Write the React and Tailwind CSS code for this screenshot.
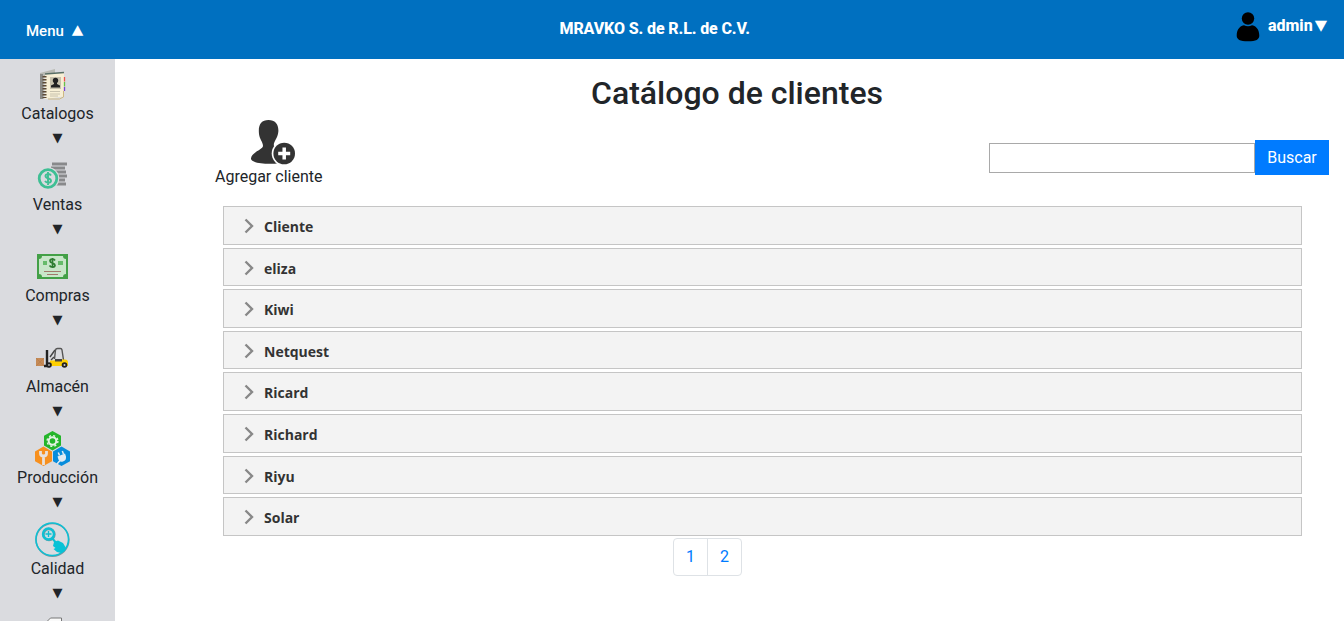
import React from "react";

function CatalogIcon() {
  return (
    <svg width="35" height="35" viewBox="0 0 35 35">
      <path d="M5 6l15-4v5L9 10v22H5z" fill="#b9bab3" />
      <path d="M6.500 7v25" stroke="#8a8a86" strokeWidth="3" />
      <path d="M10 7l19-1.500v24L10 32z" fill="#f7efd5" />
      <path d="M10 7l19-1.500" stroke="#596f66" strokeWidth="1.500" />
      <path d="M9.500 9v22" stroke="#5b4935" strokeWidth="4" strokeDasharray="1.600 1.400" />
      <path d="M15 10h11v12H15z" fill="#c7c1ac" />
      <circle cx="20.500" cy="13.500" r="2.700" fill="#222" />
      <path d="M16 20.500V18.500l3-1.500v-2h3v2l3 1.500v2z" fill="#222" />
      <path d="M15 24.500h10M15 27h10M15 29h8" stroke="#c8c2ae" />
      <path d="M29.500 10v4.500" stroke="#ee5349" strokeWidth="1.300" />
      <path d="M29.500 15v4.500" stroke="#67bf47" strokeWidth="1.300" />
      <path d="M29.500 20v4" stroke="#7941d5" strokeWidth="1.300" />
      <path d="M28.500 24v6l-4 2H13" stroke="#cdb883" fill="none" />
    </svg>
  );
}

function SalesIcon() {
  return (
    <svg width="35" height="35" viewBox="0 0 35 35">
      <path d="M17 6h15M16 10h14M19 14h12M21 18h11M22 22h8M21 26h10" stroke="#88898b" strokeWidth="2.900" />
      <circle cx="13" cy="20.500" r="11.200" fill="#dadbdf" />
      <circle cx="13" cy="20.500" r="8.800" fill="#dadbdf" stroke="#3fbf94" strokeWidth="2.800" />
      <path d="M16 17.500c-1-2-5.500-2-5.500.6 0 3 5.500 1.700 5.500 4.600 0 2.500-4.500 2.600-6 .3M13 14v13" fill="none" stroke="#3fbf94" strokeWidth="1.900" />
    </svg>
  );
}

function PurchaseIcon() {
  return (
    <svg width="35" height="35" viewBox="0 0 35 35">
      <path d="M2 5h31v25H2z" fill="#43a047" />
      <path d="M7 7h21c0 2 1 3 3 3v15c-2 0-3 1-3 3H7c0-2-1-3-3-3V10c2 0 3-1 3-3z" fill="#c8e6c9" />
      <path d="M8 12h4v4H8zM23 12h5v4h-5z" fill="#66bb6a" />
      <path d="M20 11.500c-1-2-5-1.800-5 .5 0 2.700 5 1.600 5 4.300 0 2.300-4 2.400-5.500.2M17.500 9v10" fill="none" stroke="#2e7d32" strokeWidth="1.700" />
      <path d="M9 22.500h17M12 25.500h11" stroke="#a1796a" strokeWidth="1.100" />
    </svg>
  );
}

function WarehouseIcon() {
  return (
    <svg width="35" height="35" viewBox="0 0 35 35">
      <path d="M1 18h8v8H1z" fill="#c58a56" />
      <path d="M1 18l8 8M9 18l-8 8" stroke="#b27a4b" strokeWidth=".6" />
      <path d="M9 26h6M12 10v16" stroke="#222" strokeWidth="2.400" />
      <path d="M15 17l5-7M16 20l3-3" stroke="#444" strokeWidth="1.400" />
      <path d="M19.500 19l1-9q.3-1.500 2-1.500h3q1.200 0 1.500 1.500l1.500 10" fill="none" stroke="#555" strokeWidth="1.400" />
      <path d="M15 20.500h4l2-1h9q3 0 3 3V26H15z" fill="#ffd000" />
      <path d="M20 19h7v2.500h-7z" fill="#444" />
      <circle cx="14" cy="25" r="2.800" fill="#222" /><circle cx="14" cy="25" r="1" fill="#aaa" />
      <circle cx="29.500" cy="25" r="2.800" fill="#222" /><circle cx="29.500" cy="25" r="1" fill="#ccc" />
    </svg>
  );
}

function ProductionIcon() {
  return (
    <svg width="35" height="35" viewBox="0 0 35 35">
      <path d="M17.500 0l8.500 4.800v9.700l-8.500 5-8.500-5V4.800z" fill="#24b52a" />
      <circle cx="17.500" cy="10" r="3.800" fill="none" stroke="#e2f3e2" strokeWidth="2" />
      <circle cx="17.500" cy="10" r="5.400" fill="none" stroke="#e2f3e2" strokeWidth="1.400" strokeDasharray="2.120 2.120" />
      <path d="M8.500 15.500l8.500 5v9.700L8.500 35 0 30.200v-9.700z" fill="#f7901e" />
      <path d="M8.500 34v-8M5.500 20v2.500q0 2.500 3 2.500t3-2.500V20" fill="none" stroke="#e7e1dc" strokeWidth="2.800" />
      <path d="M26.500 15.500l8.500 5v9.700L26.500 35 18 30.200v-9.700z" fill="#078ddc" />
      <path d="M22.500 25.500l7.500-3 1 3q.5 4-3 5t-4.500-2z" fill="#e0ebf3" />
      <path d="M24.500 24.500l-1.200-3M28.500 23l-1.200-3M25 29.500L22 33" stroke="#e0ebf3" strokeWidth="1.500" />
    </svg>
  );
}

function QualityIcon() {
  return (
    <svg width="35" height="35" viewBox="0 0 35 35">
      <circle cx="17.500" cy="17.800" r="16.400" fill="none" stroke="#7898a0" strokeWidth="1.500" />
      <circle cx="17.200" cy="17.200" r="16.300" fill="none" stroke="#0dc0d4" strokeWidth="1.500" />
      <circle cx="14" cy="12.500" r="5.500" fill="#c2e0e6" stroke="#7898a0" strokeWidth="2.400" />
      <circle cx="13.500" cy="12" r="5.500" fill="none" stroke="#0dc0d4" strokeWidth="2.400" />
      <path d="M10.500 12h6M13.500 9v6" stroke="#0dbed0" strokeWidth="1.300" />
      <path d="M17 16l5 6" stroke="#0dbed0" strokeWidth="2" />
      <path d="M19 20l4-1.500 5 2.500 3 5-1 3-4 2-4-1-3.500-3 2-1-2.500-2z" fill="#08c2d6" />
    </svg>
  );
}

const sections = [
  ["Catalogos", CatalogIcon],
  ["Ventas", SalesIcon],
  ["Compras", PurchaseIcon],
  ["Almacén", WarehouseIcon],
  ["Producción", ProductionIcon],
  ["Calidad", QualityIcon],
];

const clients = ["Cliente", "eliza", "Kiwi", "Netquest", "Ricard", "Richard", "Riyu", "Solar"];

export default function App() {
  return (
    <div className="flex h-[621px] w-[1344px] flex-col overflow-hidden bg-white font-['Roboto',sans-serif] text-base leading-6 text-[#212529]">
      <header className="flex h-[59px] shrink-0 bg-[#0070c0] text-white">
        <button className="flex w-[120px] items-center gap-2 pt-0.5 pl-[26px] text-[15px] font-medium">
          <span>Menu</span>
          <span className="origin-center scale-y-90 pb-1 font-['DejaVu_Sans',sans-serif] text-[15px]">▲</span>
        </button>
        <div className="flex-1 pt-[17px] pl-[439.500px] text-base font-extrabold tracking-[-0.12px]">MRAVKO S. de R.L. de C.V.</div>
        <div className="flex w-[108px]">
          <svg className="mt-3 mr-2" width="24" height="30" viewBox="0 0 24 30">
            <circle cx="12" cy="6.500" r="6.200" />
            <path d="M.7 23.500C.7 17 5 13.300 8 13.300q4 2 8 0c3 0 7.300 3.700 7.300 10.200 0 4-3 5.800-11.300 5.800S.7 27.500.7 23.500z" />
          </svg>
          <div className="flex gap-0.5 pt-3.5">
            <span className="font-extrabold">admin</span>
            <span className="-mt-0.5 origin-center scale-y-90 font-['DejaVu_Sans',sans-serif] text-base">▼</span>
          </div>
        </div>
      </header>
      <div className="flex min-h-0 flex-1">
        <aside className="w-[115px] shrink-0 overflow-hidden bg-[#dadbdf]">
          {sections.map(([label, Icon]) => (
            <div key={label} className="flex h-[91px] flex-col items-center pt-2">
              <div className="h-[35px] pr-[10px]"><Icon /></div>
              <span>{label}</span>
              <span className="font-['DejaVu_Sans',sans-serif] text-[13px]">▼</span>
            </div>
          ))}
          <div className="flex justify-center pt-3 pr-[8px]">
            <svg width="18" height="20" viewBox="0 0 18 20">
              <path d="M1.500 20V5l4-4h11v19" fill="#fafafa" stroke="#777" />
            </svg>
          </div>
        </aside>
        <main className="flex-1 pt-[15px]">
          <h1 className="pl-[15px] text-center text-[32px] leading-[38px] font-medium">Catálogo de clientes</h1>
          <div className="flex h-[94px] justify-between pt-2 pr-[15px] pl-[100px]">
            <div className="flex flex-col items-center">
              <svg className="ml-2 h-[45px] w-[46px]" viewBox="0 0 46 45">
                <path d="M18.500 0c7 0 10.500 4.500 9.800 12-.5 6-4.500 9-4.500 13 0 2 3 2.500 5 4l1 14C20 45 0 43.500 1 38.500c0-6 12-9 12-12.500 0-4-3.500-7-4-12C8 5 11 0 18.500 0z" fill="#333" />
                <circle cx="34" cy="33.500" r="12.300" fill="#fff" />
                <circle cx="34.200" cy="33.500" r="10.800" fill="#333" />
                <path d="M34.200 27.500v12M28.200 33.500h12" stroke="#fff" strokeWidth="3.500" />
              </svg>
              <span>Agregar cliente</span>
            </div>
            <div className="flex h-[75px] items-center">
              <input aria-label="Buscar cliente" className="mt-px h-[30px] w-[266px] border border-[#a9a9a9] bg-white outline-none" />
              <button className="h-[35px] w-[74px] bg-[#007bff] text-white">Buscar</button>
            </div>
          </div>
          <div className="flex flex-col gap-[3px] pr-[42px] pl-[108px]">
            {clients.map((name) => (
              <button key={name} className="flex h-[38.600px] items-center gap-2.5 border border-[#c5c5c5] bg-[#f3f3f3] pt-[1.500px] pl-5 text-left font-['Open_Sans',sans-serif] text-sm font-bold text-[#333]">
                <svg width="10" height="16" viewBox="0 0 10 16" fill="none" stroke="#888" strokeWidth="2.400">
                  <path d="M1.500 1.500L8 8l-6.500 6.500" />
                </svg>
                <span className="pt-0.5">{name}</span>
              </button>
            ))}
          </div>
          <nav className="mt-0.5 ml-[558px] flex h-[38px] w-[69px] divide-x divide-[#dee2e6] rounded border border-[#dee2e6] text-[#007bff]">
            <button className="flex-1">1</button>
            <button className="flex-1">2</button>
          </nav>
        </main>
      </div>
    </div>
  );
}
